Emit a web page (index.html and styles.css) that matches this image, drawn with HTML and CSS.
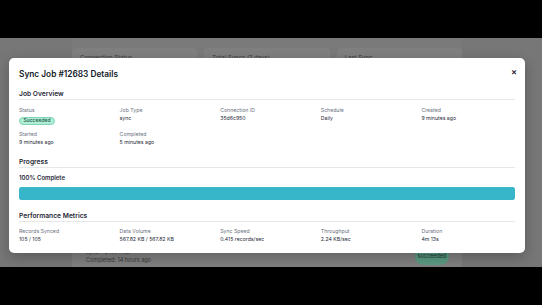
FILE: index.html
```html
<!DOCTYPE html>
<html lang="en">
<head>
<meta charset="utf-8">
<title>Sync Job Details</title>
<link rel="stylesheet" href="styles.css">
</head>
<body>
<div class="screen">
  <div class="bg-page">
    <div class="stat-cards">
      <div class="stat-card">Connection Status</div>
      <div class="stat-card">Total Syncs (7 days)</div>
      <div class="stat-card">Last Sync</div>
    </div>
    <div class="panel"></div>
    <div class="history">
      <div class="history-row">
        <div class="row-text"><div>sync • 547.71 KB</div><div>Completed: 14 hours ago</div></div>
        <span class="bg-badge">succeeded</span>
      </div>
    </div>
  </div>

  <div class="modal">
    <div class="modal-title">Sync Job #12683 Details</div>
    <button class="close">×</button>

    <section class="section first">
      <h3>Job Overview</h3>
      <div class="grid">
        <div class="cell"><div class="label">Status</div><span class="badge">Succeeded</span></div>
        <div class="cell"><div class="label">Job Type</div><div class="value">sync</div></div>
        <div class="cell"><div class="label">Connection ID</div><div class="value">35d6c950</div></div>
        <div class="cell"><div class="label">Schedule</div><div class="value">Daily</div></div>
        <div class="cell"><div class="label">Created</div><div class="value">9 minutes ago</div></div>
        <div class="cell"><div class="label">Started</div><div class="value">9 minutes ago</div></div>
        <div class="cell"><div class="label">Completed</div><div class="value">5 minutes ago</div></div>
      </div>
    </section>

    <section class="section">
      <h3>Progress</h3>
      <div class="progress-label">100% Complete</div>
      <div class="bar"><div class="bar-fill" style="width:100%"></div></div>
    </section>

    <section class="section">
      <h3>Performance Metrics</h3>
      <div class="grid">
        <div class="cell"><div class="label">Records Synced</div><div class="value">105 / 105</div></div>
        <div class="cell"><div class="label">Data Volume</div><div class="value">567.82 KB / 567.82 KB</div></div>
        <div class="cell"><div class="label">Sync Speed</div><div class="value">0.415 records/sec</div></div>
        <div class="cell"><div class="label">Throughput</div><div class="value">2.24 KB/sec</div></div>
        <div class="cell"><div class="label">Duration</div><div class="value">4m 13s</div></div>
      </div>
    </section>
  </div>
</div>
</body>
</html>
```

FILE: styles.css
```css
* { box-sizing: border-box; }
html, body { margin: 0; padding: 0; }
body {
  background: #000;
  width: 542px;
  height: 305px;
  overflow: hidden;
  font-family: Inter, "Noto Sans", "Liberation Sans", sans-serif;
}
.screen {
  position: relative;
  margin-top: 38px;
  height: 229px;
  background: #777777;
  overflow: hidden;
}
.bg-page {
  width: 390px;
  margin-left: 72px;
  padding-top: 10px;
  background: #7a7a7a;
  min-height: 100%;
}
.stat-cards {
  display: grid;
  grid-template-columns: repeat(3, 1fr);
  gap: 7px;
}
.stat-card {
  height: 45px;
  background: #808080;
  border-radius: 4px;
  padding: 6px 8px;
  font-size: 6px;
  line-height: 8px;
  color: #3c3c3c;
}
.panel {
  margin-top: 7px;
  height: 131px;
  background: #808080;
  border-radius: 4px;
}
.history {
  margin-top: 7px;
  background: #808080;
  border-radius: 4px 4px 0 0;
  padding: 0 13px 0 14px;
}
.history-row {
  height: 36px;
  display: flex;
  align-items: center;
  justify-content: space-between;
}
.row-text {
  font-size: 5.5px;
  line-height: 8px;
  color: #3a3a3a;
}
.bg-badge {
  height: 17px;
  width: 34px;
  border-radius: 9px;
  background: #5b9b83;
  color: #1e3a2f;
  font-size: 5.5px;
  display: flex;
  align-items: center;
  justify-content: center;
}

.modal {
  position: absolute;
  left: 9px;
  top: 20px;
  width: 516px;
  background: #fff;
  border-radius: 5px;
  padding: 10px 10px 10px;
  box-shadow: 0 4px 14px rgba(0, 0, 0, 0.25);
}
.modal-title {
  font-size: 8.3px;
  line-height: 12px;
  font-weight: 600;
  color: #111827;
}
.close {
  position: absolute;
  top: 9px;
  right: 8px;
  border: 0;
  background: none;
  padding: 0;
  font-family: inherit;
  font-size: 9px;
  line-height: 9px;
  font-weight: 600;
  color: #1f2937;
}
.section { margin-top: 11px; }
.section.first { margin-top: 9px; }
.section h3 {
  margin: 0 0 6.5px;
  font-size: 6.7px;
  line-height: 10px;
  font-weight: 600;
  color: #1f2937;
  border-bottom: 1px solid #e5e7eb;
}
.grid {
  display: grid;
  grid-template-columns: repeat(5, 1fr);
  column-gap: 7px;
  row-gap: 6px;
}
.cell {
  font-size: 5.2px;
  line-height: 7px;
}
.label {
  color: #6b7280;
}
.value {
  margin-top: 1px;
  color: #1f2937;
}
.badge {
  display: flex;
  align-items: center;
  width: fit-content;
  margin-top: 3px;
  height: 8px;
  padding: 0 3.5px;
  border-radius: 4px;
  background: #b1ecd6;
  border: 0.5px solid #7fd6b4;
  color: #14563f;
  font-size: 5px;
  font-weight: 500;
}
.progress-label {
  font-size: 6px;
  line-height: 8px;
  font-weight: 600;
  color: #1f2937;
}
.bar {
  margin-top: 4.5px;
  height: 13px;
  background: #e5e7eb;
  border-radius: 2px;
  overflow: hidden;
}
.bar-fill {
  height: 100%;
  background: #38b6c9;
  border-radius: 2px;
}
```
